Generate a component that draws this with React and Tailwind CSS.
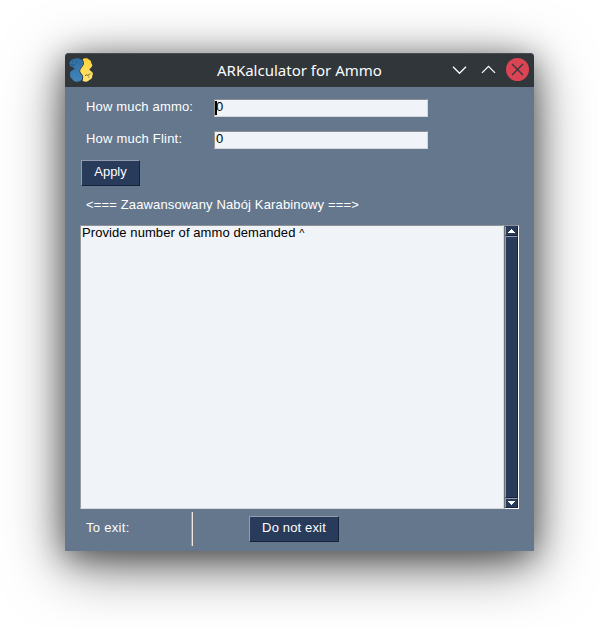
import React from "react";

function SnakeLogo() {
  return (
    <svg width="26" height="26" viewBox="0 0 26 26" className="-ml-px -mt-[2px] shrink-0">
      <defs>
        <linearGradient id="blue" x1="0" y1="0" x2="0" y2="1">
          <stop offset="0" stopColor="#2f6da0" />
          <stop offset="1" stopColor="#4285bb" />
        </linearGradient>
        <linearGradient id="yellow" x1="0" y1="0" x2="0" y2="1">
          <stop offset="0" stopColor="#ffd236" />
          <stop offset="1" stopColor="#ffe576" />
        </linearGradient>
      </defs>
      <path
        d="M5.5 2C7.5 1 11 1 13.2 2.6C15.4 4 15.8 6.5 14.5 8.6L12.1 12.2C11.2 13.8 11.3 15 12.2 16.3L13.9 18.6C15 20.2 14.4 22.3 12.8 23.6C11.3 24.9 8.5 25 6.6 24.2C5 23.6 4.7 22.2 3.6 21.2C2 20.5 1.8 18.7 2.3 17.2C1.6 15.9 2.4 14.4 4 13.6L7 11.4L4.3 10C2.3 9.6 1.3 8.3 1.6 6.6C1.2 4.4 2.9 2.6 5.5 2Z"
        fill="url(#blue)"
      />
      <path
        d="M14.6 2.6C15.8.8 19.2.6 20.8 2.4C22.5 2.8 23.4 4.5 23.2 6C24.9 7.6 24.4 9.5 22.9 10.7L21.3 12.5L23 14.3C24.9 15.2 25.5 17.2 24.3 18.5C24.8 20.8 23.2 22.2 21.5 22.8C20.2 25 16.8 25.2 14.6 23.8C14.9 22.3 15.6 20.6 15 18.9C14.4 17 12.2 16 12.1 14.1C12 11.9 15.1 9.7 15.9 7.3C16.3 5.6 15.6 4 14.6 2.6Z"
        fill="url(#yellow)"
      />
      <path d="M3 7.4L5.2 8.6L7 7.2M4 4.8h1M8 5.2h1" stroke="#1f4d78" fill="none" strokeWidth="0.9" />
      <path d="M17 18.8L18.5 17.8L20 18.4L22.3 16.5M20.3 20h1" stroke="#5e5324" fill="none" strokeWidth="0.9" />
    </svg>
  );
}

function TitleBar() {
  return (
    <header className="flex h-[34px] items-center rounded-t-[4px] border-t border-[#474d52] bg-[#31363b] pl-1 pr-[5px]">
      <SnakeLogo />
      <h1 className="-mt-px ml-[123px] w-[200px] whitespace-nowrap font-['Noto_Sans',sans-serif] text-[15px] leading-5 text-[#fcfcfc]">
        ARKalculator for Ammo
      </h1>
      <div className="-mt-[2px] ml-auto flex items-center gap-[11px]">
        <svg width="18" height="18" viewBox="0 0 18 18" fill="none" stroke="#fcfcfc" strokeWidth="1.3">
          <path d="M3 5.8L9.5 12.3L16 5.8" />
        </svg>
        <svg width="18" height="18" viewBox="0 0 18 18" fill="none" stroke="#fcfcfc" strokeWidth="1.3">
          <path d="M3 11.9L9.5 5.4L16 11.9" />
        </svg>
        <svg width="23" height="23" viewBox="0 0 23 23" className="-ml-[2px]">
          <circle cx="11.5" cy="11.5" r="11.5" fill="#da4453" />
          <path d="M6 6L17 17M17 6L6 17" stroke="#31363b" strokeWidth="1.3" />
        </svg>
      </div>
    </header>
  );
}

function Field({ label, focused, className }) {
  return (
    <div className="flex h-[18px] items-center">
      <span className={"w-[128px] pb-[2px] " + className}>{label}</span>
      <div className="flex h-[18px] w-[214px] border border-b-[#d3d7dc] border-l-[#959595] border-r-[#d3d7dc] border-t-[#8b8d90] bg-[#f0f3f7] text-black">
        <span className={focused ? "mt-px h-[14px] w-[2px] bg-black" : "w-px"} />
        <span className={focused ? "-ml-px leading-[14px]" : "leading-[14px]"}>0</span>
      </div>
    </div>
  );
}

function Button({ children, className }) {
  return (
    <button
      className={
        "flex h-[26px] items-center justify-center border border-b-[#18233a] border-l-[#939dad] border-r-[#18233a] border-t-[#939dad] bg-[#283b5b] pb-[3px] leading-4 text-white " +
        className
      }
    >
      {children}
    </button>
  );
}

function ScrollBar() {
  return (
    <div className="flex w-[15px] flex-col border border-b-white border-l-[#6c7077] border-r-white border-t-[#8d9095] bg-[#283b5b]">
      <div className="flex h-[10px] w-[13px] items-center justify-center border border-b-[#18233a] border-l-[#939dad] border-r-[#18233a] border-t-[#283b5b]">
        <svg width="9" height="5" viewBox="0 0 9 5" shapeRendering="crispEdges">
          <path d="M4 0h1v1h1v1h1v1h1v1H1V3h1V2h1V1h1z" fill="#fff" />
        </svg>
      </div>
      <div className="w-[13px] flex-1 border border-b-[#18233a] border-l-[#939dad] border-r-[#18233a] border-t-[#939dad]" />
      <div className="flex h-[10px] w-[13px] items-center justify-center border border-b-[#18233a] border-l-[#939dad] border-r-[#18233a] border-t-[#939dad]">
        <svg width="9" height="5" viewBox="0 0 9 5" shapeRendering="crispEdges">
          <path d="M1 0h7v1H7v1H6v1H5v1H4V3H3V2H2V1H1z" fill="#fff" />
        </svg>
      </div>
    </div>
  );
}

export default function App() {
  return (
    <div className="h-[628px] w-[599px] overflow-hidden bg-white pl-[65px] pt-[53px]">
      <main className="h-[498px] w-[469px] rounded-t-[4px] bg-[#64778d] font-['Liberation_Sans',Arial,sans-serif] text-[13px] leading-4 text-white shadow-[0_14px_60px_rgba(0,0,0,0.55),0_6px_30px_rgba(0,0,0,0.45)]">
        <TitleBar />
        <div className="flex flex-col pl-[15px] pt-3">
          <div className="flex flex-col gap-[14px] pl-[6px]">
            <Field label="How much ammo:" focused className="tracking-[0.17px]" />
            <Field label="How much Flint:" className="tracking-[0.2px]" />
          </div>
          <Button className="ml-px mt-[11px] w-[59px]">Apply</Button>
          <p className="ml-[6px] mt-[11px] h-4 tracking-[0.14px]">&lt;=== Zaawansowany Nabój Karabinowy ===&gt;</p>
          <div className="mt-3 flex h-[284px]">
            <div className="w-[424px] border border-b-[#d5d8d8] border-l-[#999] border-r-[#d5d8d8] border-t-[#8d9095] bg-[#f0f3f7] pl-px leading-[14px] tracking-[0.08px] text-black">
              Provide number of ammo demanded <span className="text-[11px]">^</span>
            </div>
            <ScrollBar />
          </div>
          <div className="mt-[3px] flex h-[34px] items-center">
            <span className="ml-[6px] w-[105px] pb-[3px] tracking-[0.3px]">To exit:</span>
            <div className="h-[34px] w-[2px] border-l border-r border-l-[#a09a94] border-r-[#f0e6dc]" />
            <Button className="ml-14 w-[90px] tracking-[0.15px]">Do not exit</Button>
          </div>
        </div>
      </main>
    </div>
  );
}
